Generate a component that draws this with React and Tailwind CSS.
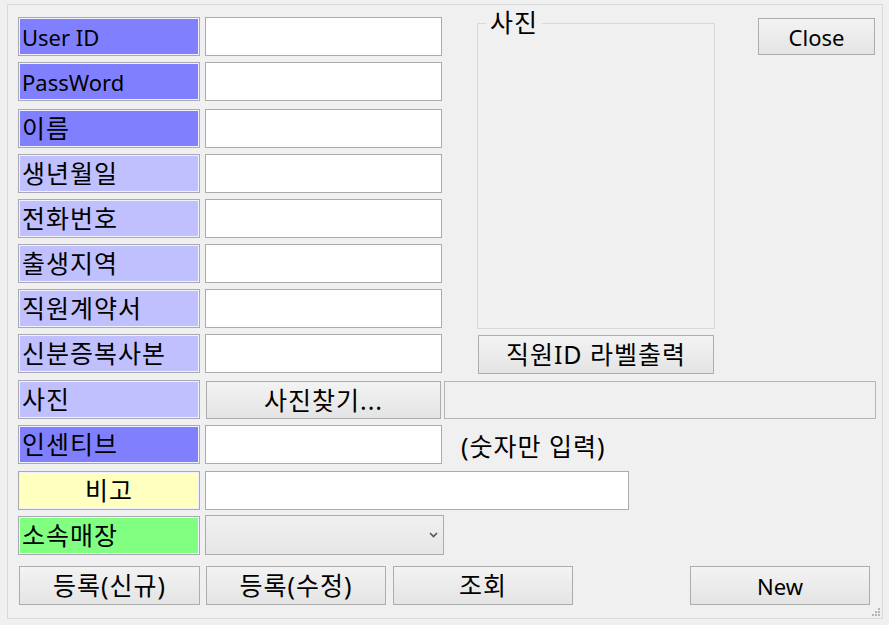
import React from 'react';

const FONT = { fontFamily: '"Noto Sans", "Noto Sans CJK KR", sans-serif' };

// 라벨 색상
const DARK = 'bg-[#8080ff]';
const LIGHT = 'bg-[#c0c0ff]';

// 한글은 조금 더 크게, 영문은 22px
const KO = 'text-[25px] tracking-[1px]';
const EN = 'text-[22px]';

function Label({ text, color, center = false, latin = false }) {
  return (
    <div
      className={`w-[182px] h-[39px] shrink-0 border border-[#a9a9b4] shadow-[inset_0_0_0_1px_#f2f2ff] ${color} flex items-center ${center ? 'justify-center' : 'pl-[3px]'} ${latin ? EN : KO} leading-none text-black whitespace-nowrap`}
    >
      {text}
    </div>
  );
}

function TextBox({ className = 'w-[237px]' }) {
  return <div className={`h-[39px] shrink-0 bg-white border border-[#ababab] ${className}`} />;
}

function Button({ children, className = '', latin = false }) {
  return (
    <div
      className={`shrink-0 flex items-center justify-center bg-gradient-to-b from-[#f3f3f3] to-[#e4e4e4] border border-[#adadad] ${latin ? EN : KO} leading-none text-black whitespace-nowrap ${className}`}
    >
      {children}
    </div>
  );
}

function Row({ children, className = '' }) {
  return <div className={`flex items-start gap-[5px] h-[39px] ${className}`}>{children}</div>;
}

const TOP_ROWS = [
  { text: 'User ID', color: DARK, mt: '', latin: true },
  { text: 'PassWord', color: DARK, mt: 'mt-[6px]', latin: true },
  { text: '이름', color: DARK, mt: 'mt-[8px]' },
  { text: '생년월일', color: LIGHT, mt: 'mt-[6px]' },
  { text: '전화번호', color: LIGHT, mt: 'mt-[6px]' },
  { text: '출생지역', color: LIGHT, mt: 'mt-[6px]' },
  { text: '직원계약서', color: LIGHT, mt: 'mt-[6px]' },
  { text: '신분증복사본', color: LIGHT, mt: 'mt-[6px]' },
];

export default function App() {
  return (
    <div className="w-[889px] h-[625px] bg-[#f0f0f0] pl-[7px] pt-[4px] overflow-hidden" style={FONT}>
      <div className="relative w-[876px] h-[615px] border border-[#dadada] pl-[10px] pt-[12px]">
        {/* 상단: 입력 항목 + 사진 + Close */}
        <div className="flex items-start">
          <div className="flex flex-col w-[424px]">
            {TOP_ROWS.map(r => (
              <Row key={r.text} className={r.mt}>
                <Label text={r.text} color={r.color} latin={r.latin} />
                <TextBox />
              </Row>
            ))}
          </div>

          <div className="flex flex-col ml-[35px]">
            <div className="relative mt-[6px] w-[238px] h-[306px] border border-[#d9d9d9]">
              <span className={`absolute -top-[15px] left-[8px] px-[4px] bg-[#f0f0f0] ${KO} leading-[26px] text-black`}>
                사진
              </span>
            </div>
            <Button className="mt-[6px] ml-[1px] w-[236px] h-[39px]">직원ID 라벨출력</Button>
          </div>

          <Button latin className="ml-[43px] mt-[1px] w-[117px] h-[37px]">Close</Button>
        </div>

        {/* 사진 */}
        <Row className="mt-[6px]">
          <Label text="사진" color={LIGHT} />
          <Button className="ml-[1px] mt-[1px] w-[235px] h-[38px]">사진찾기...</Button>
          <div className="ml-[-2px] mt-[1px] w-[432px] h-[38px] bg-[#f0f0f0] border border-[#b4b4b4]" />
        </Row>

        {/* 인센티브 */}
        <Row className="mt-[6px]">
          <Label text="인센티브" color={DARK} />
          <TextBox />
          <span className={`ml-[14px] self-center mt-[4px] ${KO} leading-none text-black whitespace-nowrap`}>
            (숫자만 입력)
          </span>
        </Row>

        {/* 비고 */}
        <Row className="mt-[7px]">
          <Label text="비고" color="bg-[#ffffc0]" center />
          <TextBox className="w-[424px]" />
        </Row>

        {/* 소속매장 */}
        <Row className="mt-[6px]">
          <Label text="소속매장" color="bg-[#80ff80]" />
          <div className="-mt-[1px] w-[239px] h-[40px] shrink-0 flex items-center justify-end pr-[5px] bg-gradient-to-b from-[#f0f0f0] to-[#e6e6e6] border border-[#acacac]">
            <svg width="9" height="6" viewBox="0 0 9 6">
              <path d="M1 1 L4.5 4.5 L8 1" fill="none" stroke="#555" strokeWidth="1.6" />
            </svg>
          </div>
        </Row>

        {/* 하단 버튼 */}
        <div className="flex items-start mt-[11px] ml-[1px] h-[39px]">
          <Button className="w-[181px] h-[39px]">등록(신규)</Button>
          <Button className="ml-[6px] w-[180px] h-[39px]">등록(수정)</Button>
          <Button className="ml-[7px] w-[180px] h-[39px]">조회</Button>
          <Button latin className="ml-[117px] w-[180px] h-[39px]">New</Button>
        </div>

        {/* 크기 조절 그립 */}
        <svg className="absolute right-[1px] bottom-[1px]" width="10" height="10" viewBox="0 0 10 10">
          <rect x="7" y="1" width="2" height="2" fill="#b5b5b5" />
          <rect x="4" y="4" width="2" height="2" fill="#b5b5b5" />
          <rect x="7" y="4" width="2" height="2" fill="#b5b5b5" />
          <rect x="1" y="7" width="2" height="2" fill="#b5b5b5" />
          <rect x="4" y="7" width="2" height="2" fill="#b5b5b5" />
          <rect x="7" y="7" width="2" height="2" fill="#b5b5b5" />
        </svg>
      </div>
    </div>
  );
}
